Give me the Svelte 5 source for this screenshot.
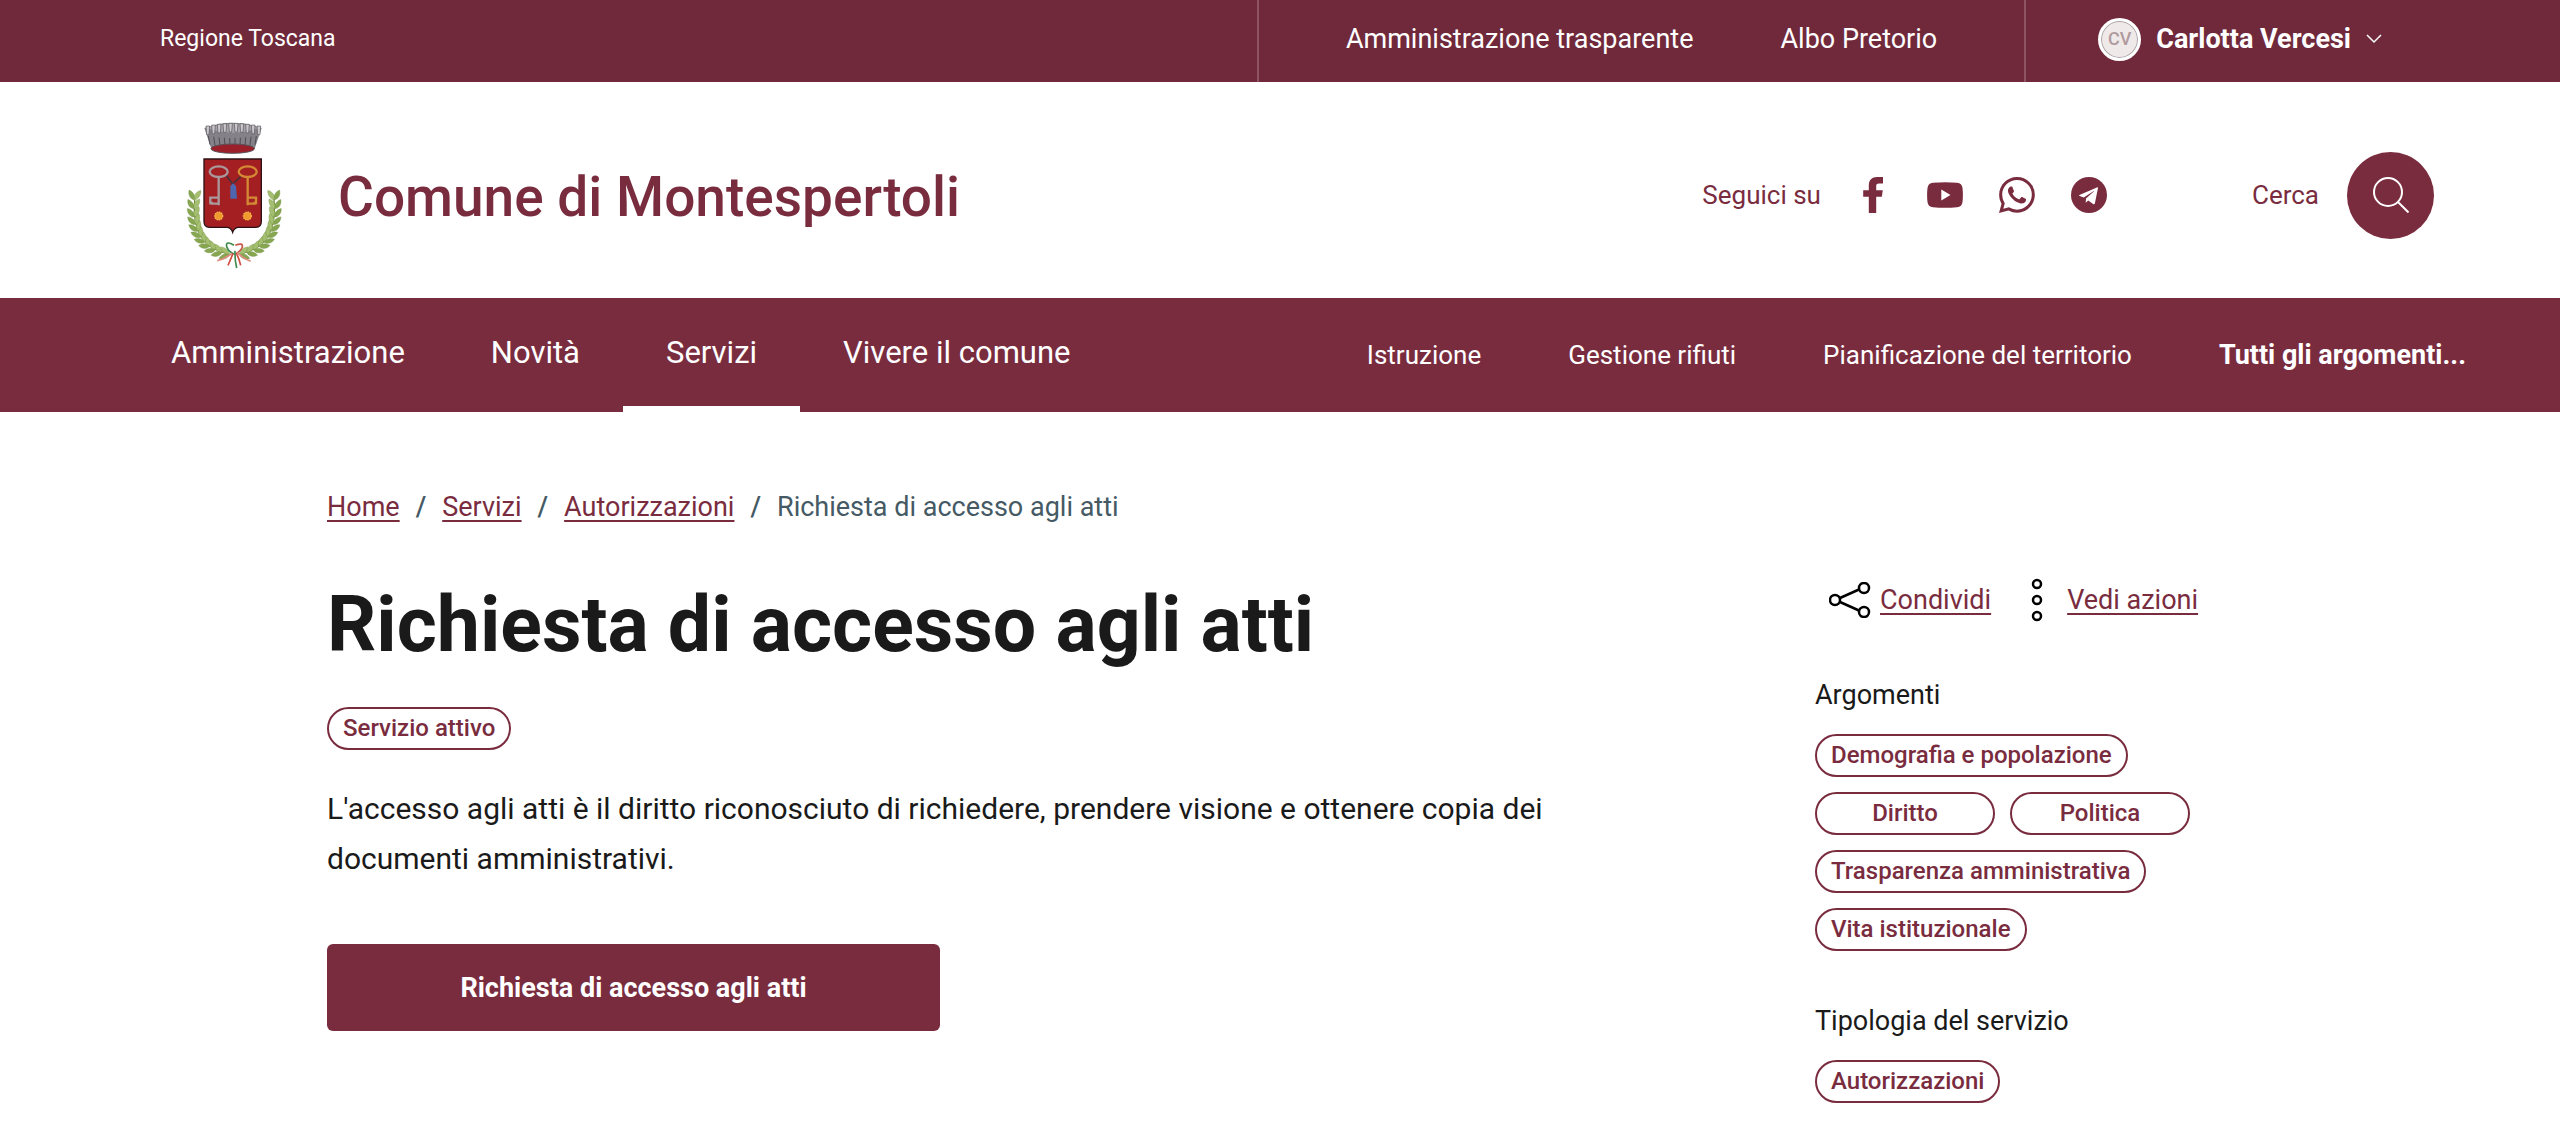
<script>
  const mainLinks = [
    { label: 'Amministrazione' },
    { label: 'Novità' },
    { label: 'Servizi', active: true },
    { label: 'Vivere il comune' }
  ];
  const topicLinks = ['Istruzione', 'Gestione rifiuti', 'Pianificazione del territorio'];
  const crumbs = ['Home', 'Servizi', 'Autorizzazioni'];
  const topics = [
    'Demografia e popolazione',
    'Diritto',
    'Politica',
    'Trasparenza amministrativa',
    'Vita istituzionale'
  ];

  // Laurel leaves laid in pairs along a quadratic curve, from the ribbon up to the tip.
  const leaves = [];
  for (let i = 0; i <= 10; i++) {
    const t = i / 10;
    const u = 1 - t;
    const x = u * u * 208 + 2 * u * t * 92 + t * t * 104;
    const y = u * u * 462 + 2 * u * t * 440 + t * t * 300;
    const dx = 2 * u * (92 - 208) + 2 * t * (104 - 92);
    const dy = 2 * u * (440 - 462) + 2 * t * (300 - 440);
    const angle = (Math.atan2(dy, dx) * 180) / Math.PI;
    leaves.push({ x, y, angle: angle - 34, tone: '#86a650' });
    leaves.push({ x, y, angle: angle + 28, tone: '#a5bf70' });
  }
  const merlons = [0, 1, 2, 3, 4, 5, 6, 7, 8, 9];
</script>

<div class="page">
  <header>
    <div class="slim">
      <a class="region" href="#regione">Regione Toscana</a>
      <nav class="slim-links" aria-label="Collegamenti istituzionali">
        <a href="#trasparente">Amministrazione trasparente</a>
        <a href="#albo">Albo Pretorio</a>
      </nav>
      <button class="user" type="button">
        <span class="avatar"><span class="initials">CV</span></span>
        <span>Carlotta Vercesi</span>
        <svg class="chevron" viewBox="0 0 16 10" aria-hidden="true"><path d="M1 1l7 7 7-7" /></svg>
      </button>
    </div>

    <div class="brand-row">
      <a class="brand" href="#home">
        <svg class="crest" viewBox="0 -15 450 570" aria-hidden="true">
          {#snippet branch()}
            <path d="M208 462Q92 440 104 300" fill="none" stroke="#6f8c3c" stroke-width="4" />
            {#each leaves as leaf}
              <path
                d="M0 0C9-11 24-10 34 0C24 8 10 8 0 0Z"
                fill={leaf.tone}
                stroke="#6d8a3e"
                stroke-width="1"
                transform="translate({leaf.x} {leaf.y}) rotate({leaf.angle})"
              />
            {/each}
          {/snippet}
          {@render branch()}
          <g transform="translate(446 0) scale(-1 1)">{@render branch()}</g>
          <path d="M133 84Q218 52 305 84L284 146Q218 172 154 146Z" fill="#858188" />
          <path d="M138 84Q218 60 300 84Q218 112 138 84Z" fill="#a5a2a8" />
          {#each merlons as m}
            <path
              d="M{138 + m * 17} {78 - 8 * Math.sin((m / 9) * Math.PI)}h11l-2 26h-7z"
              fill="#c9c7cb"
              stroke="#57545c"
              stroke-width="2"
            />
            <path
              d="M{145 + m * 16} {108 + 6 * Math.sin((m / 9) * Math.PI)}l{5 - m} 26"
              fill="none"
              stroke="#4f4c54"
              stroke-width="3"
            />
          {/each}
          <ellipse cx="218" cy="146" rx="65" ry="14" fill="#9b2029" stroke="#57535a" stroke-width="3" />
          <path d="M132 177H304V364Q304 382 288 382H234Q222 384 218 397Q214 384 202 382H148Q132 382 132 364Z" fill="#a41f22" stroke="#2c1216" stroke-width="4" />
          <path d="M198 226L218 252L246 226M218 250V262" fill="none" stroke="#4b3038" stroke-width="5" />
          <path d="M211 258l8-8 9 8 3 38h-20z" fill="#4d66ae" />
          <g fill="none" stroke="#a9989c" stroke-width="7">
            <ellipse cx="176" cy="215" rx="27" ry="16" />
            <path d="M176 232V316M175 293h-24v16h8M175 311h-24" />
          </g>
          <g fill="none" stroke="#d48a34" stroke-width="7">
            <ellipse cx="263" cy="215" rx="27" ry="16" />
            <path d="M263 232V316M264 293h24v16h-8M264 311h24" />
          </g>
          <g fill="#f09a2d" stroke="#f6b64d" stroke-width="4" stroke-dasharray="4 3">
            <circle cx="176" cy="348" r="12" />
            <circle cx="262" cy="348" r="12" />
          </g>
          <g fill="none" stroke-width="5">
            <path d="M222 436Q196 420 200 440Q206 456 222 462" stroke="#3e8a4c" />
            <path d="M226 436Q250 426 247 442Q240 456 224 462" stroke="#c9584c" />
            <path d="M216 460Q196 476 172 482" stroke="#e08a80" />
            <path d="M219 460Q212 478 204 496" stroke="#cf4f45" />
            <path d="M225 452Q224 480 230 504" stroke="#3e8a4c" />
            <path d="M229 460Q238 476 242 496" stroke="#cf4f45" />
            <path d="M232 458Q250 476 272 484" stroke="#e08a80" />
          </g>
        </svg>
        <span class="brand-name">Comune di Montespertoli</span>
      </a>

      <div class="tools">
        <div class="social">
          <span>Seguici su</span>
          <div class="social-icons">
            <a href="#facebook" aria-label="Facebook">
              <svg viewBox="0 0 36 36"><path d="M28 0v6.400h-4c-2.200 0-2.800 1-2.800 2.800v4H27.800l-1 6.500h-5.600V36h-7.400V19.700H8.200v-6.500h5.600V8.400C13.800 3 17 0 22 0z" /></svg>
            </a>
            <a href="#youtube" aria-label="YouTube">
              <svg viewBox="0 0 36 36"><path fill-rule="evenodd" d="M6 5.700Q18 4.700 30 5.700Q35 6.200 35.500 11Q36.300 18 35.500 25Q35 29.800 30 30.300Q18 31.300 6 30.300Q1 29.800.5 25Q-.3 18 .5 11Q1 6.200 6 5.700ZM14.300 12.500V23.500L23.500 18Z" /></svg>
            </a>
            <a href="#whatsapp" aria-label="WhatsApp">
              <svg viewBox="0 0 16 16"><path d="M13.601 2.326A7.85 7.85 0 0 0 7.994 0C3.627 0 .068 3.558.064 7.926c0 1.399.366 2.76 1.057 3.965L0 16l4.204-1.102a7.900 7.900 0 0 0 3.790.965h.004c4.368 0 7.926-3.558 7.930-7.930A7.900 7.900 0 0 0 13.600 2.326zM7.994 14.521a6.600 6.600 0 0 1-3.356-.920l-.240-.144-2.494.654.666-2.433-.156-.251a6.560 6.560 0 0 1-1.007-3.505c0-3.626 2.957-6.584 6.591-6.584a6.560 6.560 0 0 1 4.660 1.931 6.560 6.560 0 0 1 1.928 4.660c-.004 3.639-2.961 6.592-6.592 6.592m3.615-4.934c-.197-.099-1.170-.578-1.353-.646-.182-.065-.315-.099-.445.099-.133.197-.513.646-.627.775-.114.133-.232.148-.430.050-.197-.100-.836-.308-1.592-.985-.590-.525-.985-1.175-1.103-1.372-.114-.198-.011-.304.088-.403.087-.088.197-.232.296-.346.100-.114.133-.198.198-.330.065-.134.034-.248-.015-.347-.050-.099-.445-1.076-.612-1.470-.160-.389-.323-.335-.445-.340-.114-.007-.247-.007-.380-.007a.730.730 0 0 0-.529.247c-.182.198-.691.677-.691 1.654s.710 1.916.810 2.049c.098.133 1.394 2.132 3.383 2.992.470.205.840.326 1.129.418.475.152.904.129 1.246.080.380-.058 1.171-.480 1.338-.943.164-.464.164-.860.114-.943-.049-.084-.182-.133-.380-.232" /></svg>
            </a>
            <a href="#telegram" aria-label="Telegram">
              <svg viewBox="0 0 36 36"><circle cx="18" cy="18" r="18" /><path class="plane" d="M26.500 10.300L7.800 18.200Q7.600 18.800 12.800 20.400L22.800 13.900Q23.600 13.500 23 14.200L15 21.500L14.700 25.800L17.300 23.400L22.400 27.200Q23.500 27.700 23.900 26.300L27 11Q27.100 10.200 26.500 10.300Z" /></svg>
            </a>
          </div>
        </div>
        <div class="search">
          <span id="search-label">Cerca</span>
          <button type="button" aria-labelledby="search-label">
            <svg viewBox="0 0 36 36" aria-hidden="true"><circle cx="15" cy="15" r="14" /><path d="M25 25l10.500 10.500" /></svg>
          </button>
        </div>
      </div>
    </div>

    <div class="navbar">
      <nav class="main-links" aria-label="Principale">
        {#each mainLinks as link}
          <a href="#{link.label}" class:active={link.active}>{link.label}</a>
        {/each}
      </nav>
      <nav class="topic-links" aria-label="Argomenti">
        {#each topicLinks as label}
          <a href="#{label}">{label}</a>
        {/each}
        <a class="all" href="#argomenti">Tutti gli argomenti...</a>
      </nav>
    </div>
  </header>

  <main>
    <nav class="crumbs" aria-label="Percorso">
      {#each crumbs as crumb}
        <a href="#{crumb}">{crumb}</a><span class="sep">/</span>
      {/each}
      <span>Richiesta di accesso agli atti</span>
    </nav>

    <div class="columns">
      <section class="service">
        <h1>Richiesta di accesso agli atti</h1>
        <span class="chip">Servizio attivo</span>
        <p>L'accesso agli atti è il diritto riconosciuto di richiedere, prendere visione e ottenere copia dei documenti amministrativi.</p>
        <button class="primary" type="button">Richiesta di accesso agli atti</button>
      </section>

      <aside>
        <div class="actions">
          <a href="#condividi">
            <svg class="share" viewBox="0 0 42 36" aria-hidden="true"><path d="M11 16L30 7.500M11 20L30 28.500" /><circle cx="6" cy="18" r="5" /><circle cx="35" cy="6" r="5" /><circle cx="35" cy="30" r="5" /></svg>
            <span>Condividi</span>
          </a>
          <a class="more" href="#azioni">
            <svg class="dots" viewBox="0 0 12 44" aria-hidden="true"><circle cx="6" cy="6" r="4" /><circle cx="6" cy="22" r="4" /><circle cx="6" cy="38" r="4" /></svg>
            <span>Vedi azioni</span>
          </a>
        </div>
        <h2>Argomenti</h2>
        <div class="chips">
          {#each topics as topic}
            <a class="chip" href="#{topic}">{topic}</a>
          {/each}
        </div>
        <h2>Tipologia del servizio</h2>
        <div class="chips">
          <a class="chip" href="#autorizzazioni">Autorizzazioni</a>
        </div>
      </aside>
    </div>
  </main>
</div>

<style>
  :global(body) {
    margin: 0;
    background: #fff;
  }
  .page {
    --wine: #7a2c3f;
    --ink: #1a1a1a;
    font-family: Roboto, 'Noto Sans', sans-serif;
    font-size: 27px;
    line-height: 36px;
    color: var(--ink);
  }
  .page :is(a, button) {
    font-family: inherit;
    color: inherit;
    text-decoration: none;
  }
  button {
    border: 0;
    padding: 0;
    cursor: pointer;
  }
  svg {
    display: block;
    flex: none;
  }

  .slim {
    display: flex;
    height: 82px;
    padding-left: 160px;
    background: #70293b;
    color: #fff;
    line-height: 78px;
    white-space: nowrap;
  }
  .region {
    font-size: 23px;
  }
  .slim-links {
    display: flex;
    gap: 87px;
    margin-left: auto;
    padding: 0 87px;
    border-left: 2px solid #8f5462;
  }
  .user {
    display: flex;
    align-items: center;
    gap: 15px;
    padding: 0 178px 4px 72px;
    border-left: 2px solid #8f5462;
    background: none;
    font-size: 27px;
    font-weight: 700;
  }
  .avatar {
    display: grid;
    place-items: center;
    box-sizing: border-box;
    width: 43px;
    height: 43px;
    border: 3px solid #fff;
    border-radius: 50%;
    background: #efe9e9;
    box-shadow: inset 0 0 0 1px #a9a3a5;
    color: #b09a9e;
  }
  .initials {
    font-size: 18px;
    line-height: 20px;
    font-weight: 500;
  }
  .chevron {
    width: 16px;
    height: 10px;
    fill: none;
    stroke: #fff;
    stroke-width: 1.5;
  }

  .brand-row {
    display: flex;
    align-items: center;
    justify-content: space-between;
    height: 216px;
    padding: 0 126px 0 160px;
    color: var(--wine);
  }
  .brand {
    display: flex;
    align-items: center;
    gap: 28px;
  }
  .crest {
    width: 150px;
    height: 190px;
  }
  .brand-name {
    padding-top: 14px;
    font-size: 55px;
    line-height: 64px;
    font-weight: 500;
    white-space: nowrap;
  }
  .tools,
  .social,
  .social-icons,
  .search {
    display: flex;
    align-items: center;
  }
  .tools {
    gap: 145px;
    padding-top: 10px;
    font-size: 26px;
  }
  .social {
    gap: 34px;
  }
  .social-icons {
    gap: 36px;
  }
  .social-icons svg {
    width: 36px;
    height: 36px;
    fill: var(--wine);
  }
  .social-icons .plane {
    fill: #fff;
  }
  .search {
    gap: 28px;
  }
  .search button {
    display: grid;
    place-items: center;
    width: 87px;
    height: 87px;
    border-radius: 50%;
    background: var(--wine);
  }
  .search svg {
    width: 36px;
    height: 36px;
    fill: none;
    stroke: #fff;
    stroke-width: 2;
  }

  .navbar {
    display: flex;
    justify-content: space-between;
    height: 114px;
    padding: 0 94px 0 128px;
    background: var(--wine);
    color: #fff;
    white-space: nowrap;
  }
  .main-links,
  .topic-links {
    display: flex;
  }
  .main-links a {
    box-sizing: border-box;
    padding: 0 43px;
    line-height: 110px;
    font-size: 31px;
  }
  .main-links .active {
    border-bottom: 6px solid #fff;
  }
  .topic-links {
    gap: 87px;
    line-height: 114px;
    font-size: 26px;
  }
  .all {
    font-size: 27px;
    font-weight: 700;
  }

  main {
    padding: 77px 327px 36px;
  }
  .crumbs {
    display: flex;
    gap: 16px;
    color: #455a64;
  }
  .crumbs a {
    color: var(--wine);
    text-decoration: underline;
    text-underline-offset: 4px;
    text-decoration-thickness: 2px;
  }
  .sep {
    font-weight: 500;
  }
  .columns {
    display: grid;
    grid-template-columns: minmax(0, 1fr) 418px;
  }
  .service {
    display: flex;
    flex-direction: column;
    align-items: flex-start;
    padding-top: 52px;
  }
  h1 {
    margin: 0 0 34px;
    font-size: 77px;
    line-height: 96px;
    font-weight: 700;
  }
  .chip {
    display: inline-block;
    box-sizing: border-box;
    height: 43px;
    padding: 0 14px;
    border: 2px solid var(--wine);
    border-radius: 22px;
    color: var(--wine);
    font-size: 24px;
    line-height: 39px;
    font-weight: 500;
    text-align: center;
  }
  a.chip {
    min-width: 180px;
    color: var(--wine);
  }
  p {
    max-width: 1260px;
    margin: 34px 0 60px;
    font-size: 30px;
    line-height: 50px;
  }
  .page .primary {
    width: 613px;
    height: 87px;
    border-radius: 6px;
    background: var(--wine);
    color: #fff;
    font-size: 27px;
    font-weight: 700;
  }

  aside {
    padding-top: 53px;
  }
  .actions {
    display: flex;
    gap: 40px;
    margin-bottom: 55px;
    padding-left: 14px;
  }
  .actions a {
    display: flex;
    align-items: center;
    gap: 9px;
    color: var(--wine);
    text-decoration: underline;
    text-underline-offset: 4px;
    text-decoration-thickness: 2px;
  }
  .actions .more {
    gap: 24px;
  }
  .actions svg {
    fill: none;
    stroke: #000;
    stroke-width: 2.5;
  }
  .share {
    width: 42px;
    height: 36px;
  }
  .dots {
    width: 12px;
    height: 44px;
  }
  h2 {
    margin: 52px 0 21px;
    font-size: 27px;
    line-height: 36px;
    font-weight: 400;
  }
  .chips {
    display: flex;
    flex-wrap: wrap;
    gap: 15px;
  }
</style>
